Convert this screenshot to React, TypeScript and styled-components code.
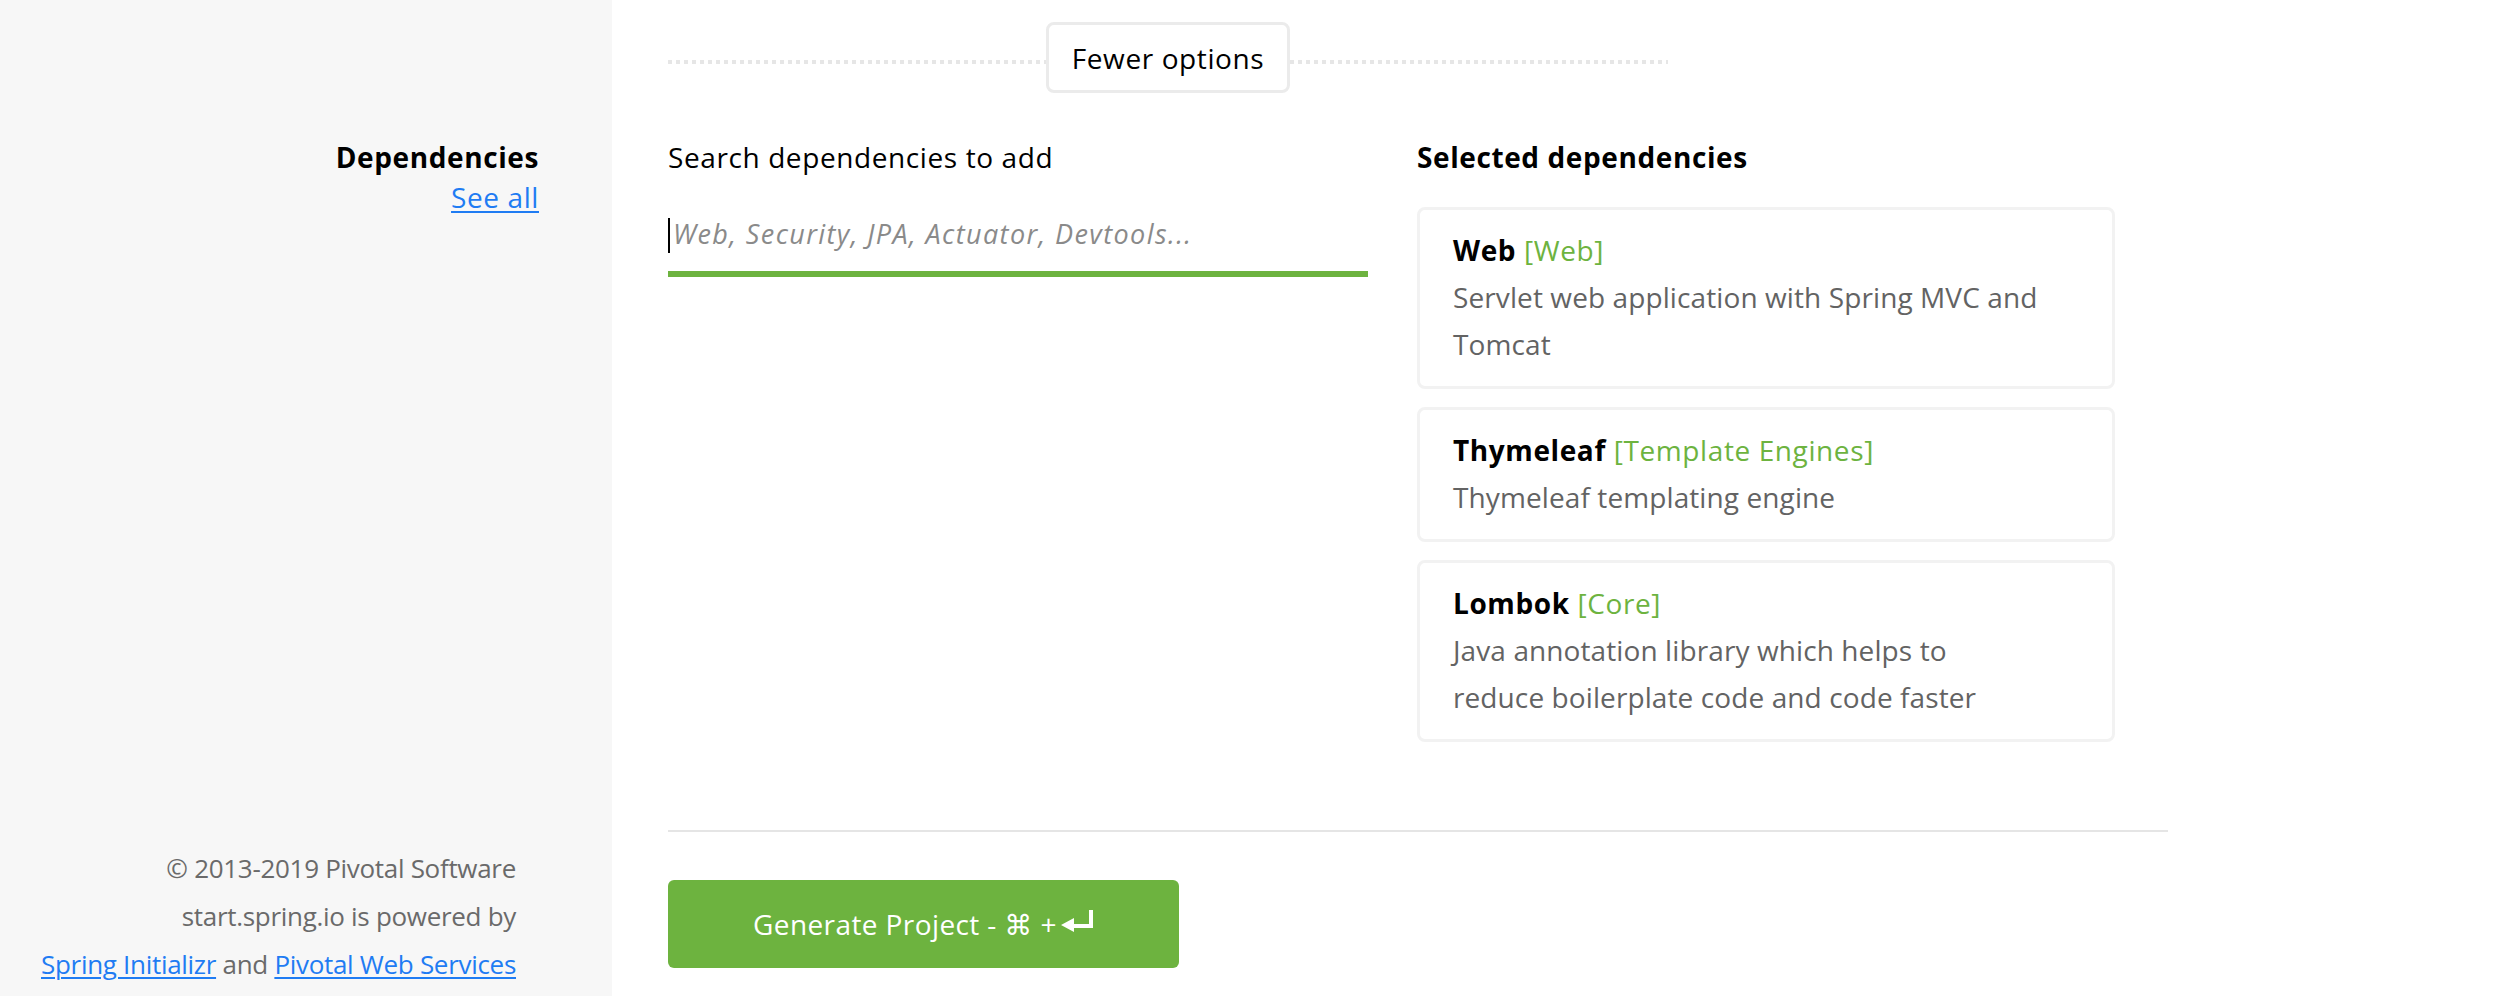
import React from "react";
import styled, { createGlobalStyle } from "styled-components";

const GlobalStyle = createGlobalStyle`
  html, body {
    margin: 0;
    padding: 0;
    background: #ffffff;
  }
  body {
    font-family: "Open Sans", "DejaVu Sans", sans-serif;
    color: #000000;
    -webkit-font-smoothing: antialiased;
  }
`;

const GREEN = "#6db33f";
const BLUE = "#1f7cf3";

const Page = styled.div`
  display: grid;
  grid-template-columns: 612px 1fr;
  min-height: 996px;
`;

const Sidebar = styled.aside`
  background: #f7f7f7;
  display: flex;
  flex-direction: column;
  justify-content: space-between;
  padding: 137px 0 8px;
  box-sizing: border-box;
`;

const FieldLabel = styled.div`
  text-align: right;
  padding-right: 73px;
  font-size: 28px;
  line-height: 40px;
  letter-spacing: 0.6px;
`;

const LabelTitle = styled.div`
  font-weight: 700;
  color: #000;
`;

const Link = styled.a`
  color: ${BLUE};
  text-decoration: underline;
  text-decoration-thickness: 2px;
  text-underline-offset: 3px;
  cursor: pointer;
`;

const Footer = styled.footer`
  text-align: right;
  padding-right: 96px;
  font-size: 26px;
  line-height: 48px;
  letter-spacing: -0.3px;
  white-space: nowrap;
  color: #6a6a6a;
`;

const Main = styled.main`
  padding: 22px 0 0 56px;
  display: flex;
  flex-direction: column;
  align-items: flex-start;
`;

const OptionsBar = styled.div`
  display: flex;
  align-items: center;
  width: 1000px;
`;

const DottedLine = styled.div`
  flex: 1;
  height: 4px;
  margin-top: 9px;
  background-image: linear-gradient(to right, #e6e6e6 50%, transparent 50%);
  background-size: 8px 4px;
`;

const OptionsButton = styled.button`
  box-sizing: border-box;
  height: 71px;
  padding: 0 23px;
  display: flex;
  align-items: center;
  border: 3px solid #ebebeb;
  border-radius: 8px;
  background: #ffffff;
  font-family: inherit;
  font-size: 28px;
  letter-spacing: 0.6px;
  color: #000;
  cursor: pointer;
`;

const Columns = styled.div`
  display: grid;
  grid-template-columns: 700px 698px;
  column-gap: 49px;
  align-items: start;
  margin-top: 45px;
`;

const Column = styled.section`
  display: flex;
  flex-direction: column;
`;

const SectionTitle = styled.h2<{ $bold?: boolean }>`
  margin: 0;
  font-size: 28px;
  line-height: 38px;
  letter-spacing: 0.6px;
  font-weight: ${(p) => (p.$bold ? 700 : 400)};
  color: #000;
`;

const SearchBox = styled.div`
  position: relative;
  margin-top: 19px;
`;

const SearchInput = styled.input`
  box-sizing: border-box;
  display: block;
  width: 100%;
  height: 82px;
  padding: 0 0 0 5px;
  border: 0;
  border-bottom: 6px solid ${GREEN};
  outline: none;
  background: transparent;
  font-family: inherit;
  font-size: 27px;
  font-style: italic;
  letter-spacing: 1.4px;
  color: #000;

  &::placeholder {
    color: #8a8a8a;
    font-style: italic;
  }
`;

const Caret = styled.span`
  position: absolute;
  left: 0;
  top: 23px;
  width: 2px;
  height: 35px;
  background: #000;
`;

const CardList = styled.div`
  display: flex;
  flex-direction: column;
  gap: 18px;
  margin-top: 31px;
`;

const Card = styled.article`
  border: 3px solid #f2f2f2;
  border-radius: 8px;
  padding: 17px 40px 18px 33px;
  font-size: 28px;
  line-height: 47px;
  letter-spacing: 0.6px;
  background: #fff;
`;

const CardTitle = styled.div`
  font-weight: 700;
  color: #000;
`;

const CardGroup = styled.span`
  font-weight: 400;
  color: ${GREEN};
`;

const DescLine = styled.div`
  color: #636363;
  letter-spacing: 0.1px;
  white-space: nowrap;
`;

const Divider = styled.hr`
  width: 1500px;
  height: 2px;
  margin: 88px 0 0;
  border: 0;
  background: #e5e5e5;
`;

const GenerateButton = styled.button`
  margin-top: 48px;
  width: 511px;
  height: 88px;
  display: flex;
  align-items: center;
  justify-content: center;
  gap: 4px;
  border: 0;
  border-radius: 6px;
  background: ${GREEN};
  color: #ffffff;
  font-family: inherit;
  font-size: 28px;
  letter-spacing: 0.4px;
  cursor: pointer;
`;

const EnterIcon = styled.svg`
  width: 33px;
  height: 22px;
  margin-top: -6px;
`;

const deps = [
  {
    name: "Web",
    group: "Web",
    desc: ["Servlet web application with Spring MVC and", "Tomcat"],
  },
  {
    name: "Thymeleaf",
    group: "Template Engines",
    desc: ["Thymeleaf templating engine"],
  },
  {
    name: "Lombok",
    group: "Core",
    desc: ["Java annotation library which helps to", "reduce boilerplate code and code faster"],
  },
];

export default function App() {
  return (
    <>
      <GlobalStyle />
      <Page>
        <Sidebar>
          <FieldLabel>
            <LabelTitle>Dependencies</LabelTitle>
            <Link>See all</Link>
          </FieldLabel>
          <Footer>
            <div>© 2013-2019 Pivotal Software</div>
            <div>start.spring.io is powered by</div>
            <div>
              <Link>Spring Initializr</Link> and <Link>Pivotal Web Services</Link>
            </div>
          </Footer>
        </Sidebar>
        <Main>
          <OptionsBar>
            <DottedLine />
            <OptionsButton>Fewer options</OptionsButton>
            <DottedLine />
          </OptionsBar>
          <Columns>
            <Column>
              <SectionTitle>Search dependencies to add</SectionTitle>
              <SearchBox>
                <SearchInput placeholder="Web, Security, JPA, Actuator, Devtools..." />
                <Caret />
              </SearchBox>
            </Column>
            <Column>
              <SectionTitle $bold>Selected dependencies</SectionTitle>
              <CardList>
                {deps.map((d) => (
                  <Card key={d.name}>
                    <CardTitle>
                      {d.name} <CardGroup>[{d.group}]</CardGroup>
                    </CardTitle>
                    {d.desc.map((line) => (
                      <DescLine key={line}>{line}</DescLine>
                    ))}
                  </Card>
                ))}
              </CardList>
            </Column>
          </Columns>
          <Divider />
          <GenerateButton>
            Generate Project - ⌘ +
            <EnterIcon viewBox="0 0 33 22">
              <path d="M28 0h4v18H13v4L0 15l13-7v6h15z" fill="#ffffff" />
            </EnterIcon>
          </GenerateButton>
        </Main>
      </Page>
    </>
  );
}
